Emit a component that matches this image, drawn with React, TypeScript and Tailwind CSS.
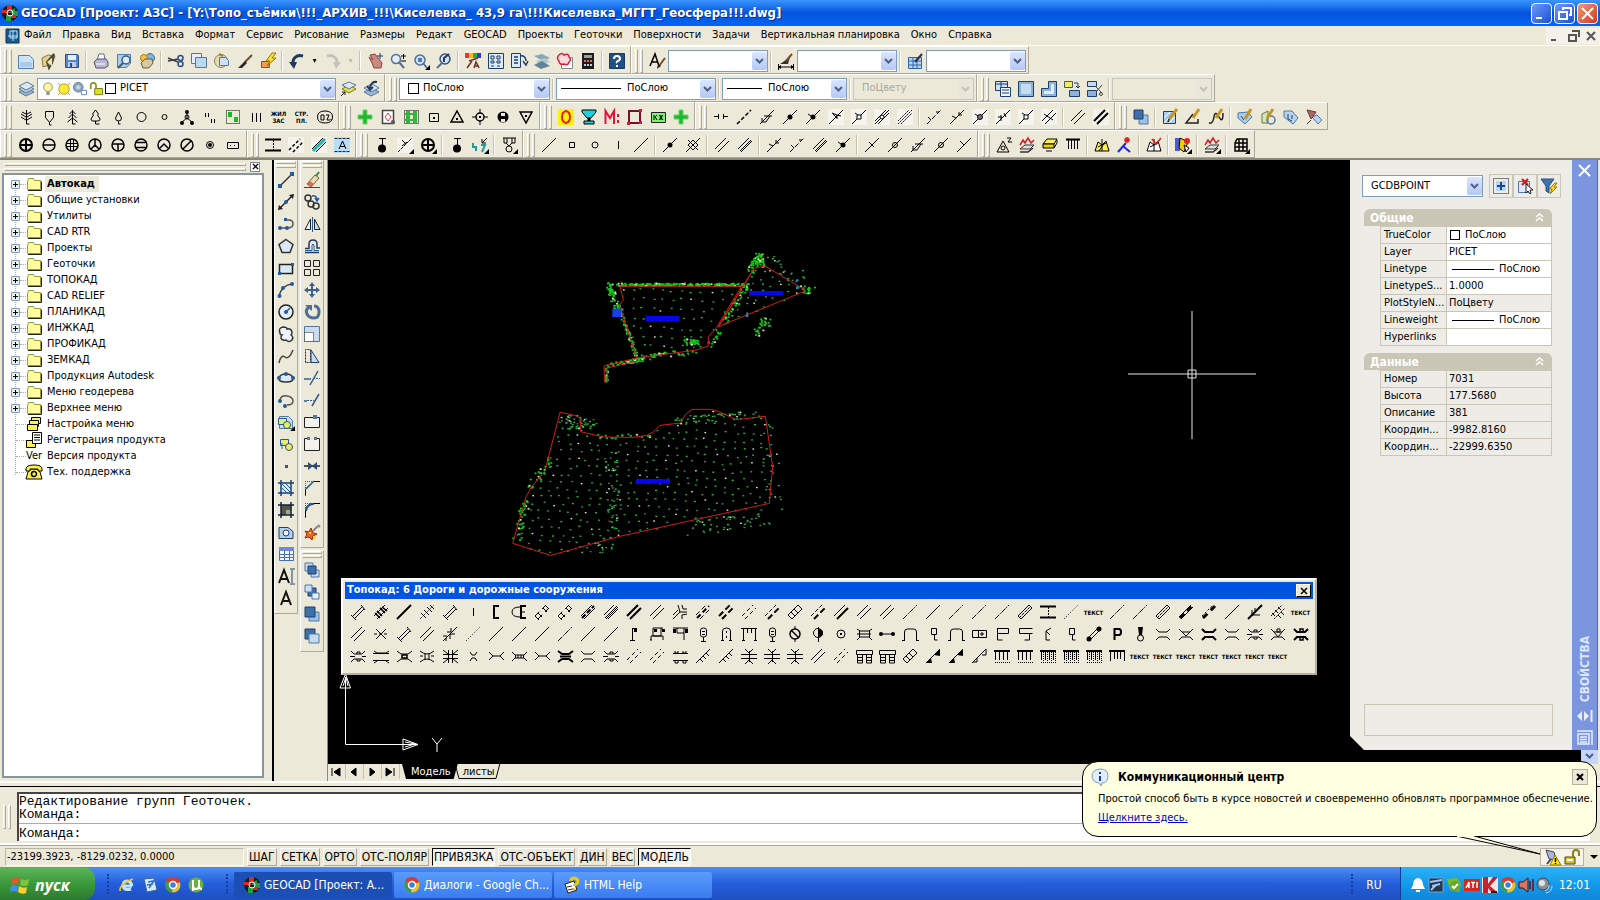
import { useState } from "react";
import type { ReactNode } from "react";
import clsx from "clsx";

// ─── Icon art ────────────────────────────────────────────────────────────────
// Every icon lives in a 16x16 box. A plain string is a thin black outline,
// an array is a stack of layers: [path, fill, stroke, width, dash].

type Layer = [d: string, fill?: string, stroke?: string, width?: number, dash?: string];
type Art = string | Layer[];

const ring = (x: number, y: number, r: number) =>
  `M${x - r} ${y}a${r} ${r} 0 1 0 ${2 * r} 0a${r} ${r} 0 1 0 ${-2 * r} 0z`;
const line = (d: string, stroke = "#000", width = 1, dash?: string): Layer => [d, "none", stroke, width, dash];
const box = (x: number, y: number, w: number, h: number) => `M${x} ${y}h${w}v${h}h${-w}z`;

const DIAG = "M1 15L15 1";
const PAIR = "M1 12L12 1M4 15L15 4";
const CULVERT = "M1 3L4 6H12L15 3M1 14L4 11H12L15 14";
const NAVY = "#1d3f6e";
const STEEL = "#4f78a8";
const PALE = "#c9dcf0";
const DOT = "#235a9c";
const SHEET: Layer = ["M1.500 2.500h9l4 4v8h-13z", PALE, STEEL];
const CORNER: Layer = ["M17 12v5h-5z", "#000"];

const art: Record<string, Art> = {
  // standard
  new: [["M.5 2.500h11l4 4v9h-15z", "#cfe3f6", "#4b7fb5"], ["M2 9h12v5h-12z", "#a9cbe9"]],
  open: [["M1 5l6-3 7 1-3 8-9 3z", "#e2cf93", "#8c7a3d"], line("M13 1l-7 8 2 6 3-5z", "#4e4b34", 2), ["M6 9l5-4v8z", "#f1e7b5"]],
  save: [["M1.500 1.500h12l1 1v12h-13z", "#5a86c4", "#28508c"], [box(4, 2, 8, 5), "#e4eefb"], [box(4, 9, 8, 5), "#b9cbe8"], [box(6, 10, 2, 4), "#28508c"]],
  print: [["M4 7l2-6h5l1 6z", "#fff", "#6a6d8c"], ["M1 9l3-3h9l2 3v4l-3 2h-9z", "#b8b8d4", "#50527a"], line("M3 11h9", "#fff")],
  preview: [["M1.500 1.500h13v9l-4 4h-9z", "#a9cdea", "#4b7fb5"], [ring(10, 7, 4), "#dcecf9", "#3d5c80", 1.500], line("M7 10l-5 5", "#3d5c80", 2)],
  publish: [[ring(11, 5, 4.500), "#7fb3e0", "#3a6ca0"], [ring(5, 5, 3.500), "#f3c341", "#a77c12"], ["M2 10l4-4h7l1 4-4 5h-6z", "#d8c9a5", "#6b5c3a"]],
  cut: [line("M0 5l10 4M0 8l10-2", "#3c3c44", 1.500), line(ring(12.500, 5, 2.500) + ring(12.500, 11, 2.500), "#2b4f8a", 1.500)],
  copy: [["M.5.5h10v10h-10z", "#e5f0fb", STEEL], ["M4.500 4.500h11v10h-11z", "#bcd9f2", STEEL]],
  paste: [[ring(7, 8, 6.500), "#e5dcae", "#8e8552"], ["M5.500 4.500h6l3 3v5h-9z", "#cfe2f5", STEEL], line("M5 1l4 2", "#8e8552", 2)],
  brush: [line("M15 2l-7 7", "#7b4a2a", 2), ["M8 8l2 2-5 5-4 0z", "#2c2a28"]],
  bolt: [["M1.500 8.500h8v6h-8z", "#f49c50", "#a04a10"], ["M12 0l-6 8h4l-3 5 9-8h-4l4-5z", "#ffdf28", "#94760b"]],
  undo: [line("M14 3C7 1 3 6 4 12", "#1f3a5f", 3), ["M0 9l8 0-3 7z", "#1f3a5f"]],
  redo: [line("M2 3c7-2 11 3 10 9", "#c4c2b8", 3), ["M16 9l-8 0 3 7z", "#c4c2b8"]],
  hand: [["M3 2l3 5-4-3 3 6 2 5h7l1-5-3-4-4-5z", "#c98a82", "#8a4640"], line("M13 0v6M10 3h6", NAVY)],
  zoomrt: [[ring(6, 6, 4.500), "#e1edf8", "#55708e", 1.500], line("M9 9l5 6", "#55708e", 2), line("M11 3h5M13.500 1v5M11 8h5", "#000")],
  zoomwin: [[ring(7, 7, 5), "#cfe1f4", "#55708e", 1.500], [box(5, 5, 4, 4), "#4b7fb5"], line("M10 10l4 5", "#55708e", 2), CORNER],
  zoomprev: [[ring(9, 6, 5), "#cfe1f4", "#37526f", 1.500], line("M6 10l-5 5", "#55708e", 2), line("M13 1L8 5v4", "#1f3a5f", 2)],
  props: [[box(0, 0, 4, 5), "#e33"], [box(4, 0, 4, 5), "#fb0"], [box(8, 0, 4, 5), "#3a3"], [box(12, 0, 4, 5), "#33e"], line("M2 15l5-7M13 5L4 8M9 15l2-6 3 6M10 13h4", "#70342c", 1.500)],
  design: [["M.5.5h15v15h-15z", "#dce9f7", NAVY], line(box(3, 3, 3, 3) + box(9, 3, 3, 3) + box(3, 8, 3, 2) + box(9, 8, 3, 2) + "M3 13h3M9 13h3", NAVY)],
  toolpal: [["M.5.5h9v14h-9z", "#dce9f7", NAVY], line("M3 4h4M3 7h4M3 10h4M9 3c4-1 6 2 6 5M12 8l3 4 2-4", NAVY, 1.500)],
  sheets: [["M0 3l8-2 8 4-7 3z", "#86a7b9"], ["M2 8l9-3 5 4-10 3z", "#b4c8d0"], ["M0 12l8-4 8 5-9 3z", "#5e8698"]],
  markup: [["M4.500 4.500h11v11h-11z", "#fff", "#888"], ["M2 2q3-3 5 0q5-2 5 2q3 3 0 5q-1 4-5 2q-5 1-5-3q-3-3 0-6z", "#ffd9dd", "#d2233c", 1.500]],
  calc: [[box(2, 0, 12, 16), "#1c1c20"], [box(4, 2, 8, 3), "#8ea88c"], [box(4, 7, 2, 2) + box(7, 7, 2, 2) + box(10, 7, 2, 2), "#e66"], [box(4, 11, 2, 2) + box(7, 11, 2, 2) + box(10, 11, 2, 2), "#ccc"]],
  help: [["M.5.5h15v15h-15z", "#1f5187", "#163a62"], line("M5 6q0-3 3-3t3 3q0 1-2 2t-1 2M8 12v2", "#fff", 2)],
  styleA: [line("M1 13L6 1l4 12M3 9h6", "#000", 1.500), line("M16 5l-6 8", "#7b4a2a", 2), ["M9 11l3 2-4 3z", "#222"]],
  styleDim: [line("M0 14h16M.5 11v6M15.500 11v6", "#000"), ["M0 14l3-2v4zM16 14l-3-2v4z", "#000"], ["M2 11l10-7-2 7z", "#333"], line("M14 1L8 8", "#7b4a2a", 2)],
  styleTable: [["M1.500 4.500h13v11h-13z", "#b9d4f1", "#2f66a8"], line("M1 8h13M1 12h13M6 4v11M10 4v11", "#2f66a8"), line("M15 1L8 9", "#333", 2)],
  // layers and viewports
  layers: [["M1 11l7 4 8-4-7-4z", "#9fb8d1", "#56779a"], ["M1 8l7 4 8-4-7-4z", "#bcd0e4", "#56779a"], ["M1 5l7 4 8-4-7-4z", "#dbe7f3", "#56779a"]],
  layercur: [["M2 8l7 4 7-4-7-4z", "#e5df4c", "#7a7a20"], ["M2 4l7 4 7-4-7-3z", "#dbe7f3", "#56779a"], line("M1 15l4-4M2 11h3v3", "#222")],
  layerprev: [["M1 11l7 4 8-4-7-4z", "#9fb8d1", "#56779a"], ["M1 7l7 4 8-4-7-4z", "#dbe7f3", "#56779a"], line("M14 1Q8 0 7 7M4 5l3 4 3-3", "#1f3a5f", 2)],
  bulb: [[ring(8, 6, 5), "#fff5ab", "#8e8543"], [box(6, 11, 4, 4), "#9a9a8a"]],
  sun: [[ring(8, 8, 6), "#ffe936", "#a79a1c"], line("M1 1l3 3M15 1l-3 3M1 15l3-3M15 15l-3-3", "#a79a1c")],
  freeze: [[ring(6, 6, 5.500), "#8fa6bb", "#5b7893"], [ring(6, 6, 2.500), "#c6d3df"], ["M9.500 9.500h6v5h-6z", "#fff", "#4b7fb5"]],
  lock: [["M6.500 7.500h9v7h-9z", "#d9e21c", "#6c7208"], line("M2 8V4q0-3 3-3t3 3v4", "#8d9422", 2)],
  vp1: [["M.5.5h12v9h-12z", "#cfe1f4", NAVY], line("M1 3h12M6 1v8", NAVY), ["M5.500 6.500h10v9h-10z", "#eef5fc", NAVY], line("M7 9h7M7 12h7", NAVY)],
  vp2: [["M.5.5h15v15h-15z", "#8fb3d8", NAVY], ["M3 3h10v10h-10z", "#c5dbf0"]],
  vp3: [["M7.500.5h8v15h-15v-8h7z", "#8fb3d8", NAVY], ["M10 3h3v10h-10v-3h7z", "#e1eefa"]],
  vp4: [["M.5.5h8v6h-8z", "#ebf255", "#555"], ["M5.500 9.500h10v6h-10z", "#8fb3d8", NAVY], line("M10 2h4v4M12 5l2 2 2-2", NAVY)],
  vp5: [["M.5.5h9v5h-9z", PALE, NAVY], ["M.5 9.500h9v6h-9z", "#8fb3d8", NAVY], line("M15 4l-6 7M9 6l6 6", "#444"), line(ring(14, 13, 1.500), "#444")],
  // plants and signs
  fir: [line("M8.500 1v14M8 5L4 3M9 5l4-2M8 8L3 5M9 8l5-3M8 11L3 8M9 11l5-3M8.500 15h3")],
  shield: "M4.500 2.500h8v6l-4 5l-4-5zM8.500 13v3h2",
  pine: "M8.500 1v14h3M8.500 2l-3 3M8.500 2l3 3M8.500 5l-4 4M8.500 5l4 4M8.500 9l-5 4M8.500 9l5 4",
  leaf: "M8.500 1L5.500 5l1 1L4 10q0 2 2 2h5q2 0 2-2l-2.500-4 1-1zM8.500 12v3h4",
  drop: "M8.500 3L5.500 9q0 3 3 3q3 0 3-3zM8.500 12v3h2",
  circle: ring(8.500, 8, 4.500),
  circleS: ring(8.500, 8, 2.500),
  tripod: [line("M8 3v6l-5 4M8 9l5 4"), [ring(8, 3, 2) + ring(3, 14, 2) + ring(13, 14, 2), "#000"], line(ring(8, 8, 2))],
  quotes: "M3.500 4v4M6.500 4v4M9.500 10v4M12.500 10v4",
  greensel: [line("M1.500 1.500h13v13h-13z", "#000", 1, "1 1"), [box(3, 3, 4, 5) + box(9, 8, 4, 5), "#10c020"]],
  bars: "M4.500 4v9M8.500 4v9M12.500 4v9",
  oval: [line("M.5 8q0-6 7.500-6t7.500 6-7.500 6-7.500-6z"), line("M4 6h3v5h-3zM9 6h3l-2 5h3M14 10v1")],
  plus: [["M6 1h4v5h5v4h-5v5h-4v-5h-5v-4h5z", "#23b82c", "#62d868"]],
  cardred: [["M2.500 1.500h11v13h-11z", "#fff", "#444", 1.500], line("M8 4l3 4-3 4-3-4z", "#e33"), [ring(13, 13, 2), "#555"]],
  greengrid: [line("M1.500 1.500h14v13h-14z", "#000", 1, "1 1"), ["M3 2h4v12h-4zM10 2h4v12h-4z", "#34b63c"], line("M2 5h12M2 11h12", "#34b63c", 2)],
  sqdot: [line("M3.500 4.500h9v8h-9z", "#000"), [box(7, 8, 2, 2), "#000"]],
  tri: [line("M8 2l6 11H2z", "#000", 1.500), [box(7, 9, 2, 2), "#000"]],
  target: [line(ring(8, 8, 4), "#000", 1.500), line("M8 0v4M8 12v4M0 8h4M12 8h4"), [box(7, 7, 2, 2), "#000"]],
  film: [[ring(8, 8, 5.500), "#000"], [box(6, 4, 4, 3) + box(6, 10, 4, 3), "#ece9d8"]],
  triDown: [line("M2 3h12L8 14z", "#000", 1.500), [box(7, 6, 2, 2), "#000"]],
  zero: [[box(0, 0, 16, 16), "#fff200"], line("M8 2q-4 1-4 6t4 6q4-1 4-6t-4-6z", "#e02010", 2)],
  goblet: [["M1 1h14v2l-5 6h-4L1 3z", "#22d0d8", "#000"], line("M8 9v4", "#000", 3), ["M3 12h10v3H3z", "#22d0d8", "#000"]],
  mred: [line("M1.500 15V2L6 9l4-7v13", "#e8103c", 2), [box(13, 5, 2, 3) + box(13, 11, 2, 3), "#e8103c"]],
  sqred: [line("M2 2h11v12H2z", "#7a1028", 2), [box(12, 0, 3, 3) + box(0, 13, 3, 3) + box(12, 12, 3, 3), "#e8103c"]],
  kj: [["M1.500 3.500h14v10h-14z", "#7ff070", "#222"], line("M4 6v5M7 6L5 8l2 3M11 6v5M9 6l4 5M13 6l-4 5", "#000")],
  // point symbols in a circle
  cPlus: [line(ring(8, 8, 6) + "M8 2v12M2 8h12", "#000", 2)],
  cMinus: [line(ring(8, 8, 6) + "M2 8h12", "#000", 1.500)],
  cGrid: [line(ring(8, 8, 6), "#000", 1.500), line("M6.500 2v12M9.500 2v12M2 6.500h12M2 9.500h12")],
  cY: [line(ring(8, 8, 6) + "M8 2v6l-4 4M8 8l4 4", "#000", 1.500)],
  cT: [line(ring(8, 8, 6) + "M2 7h12M8 7v7", "#000", 1.500)],
  cEq: [line(ring(8, 8, 6) + "M3 5.500h10M3 10.500h10", "#000", 1.500)],
  cCaret: [line(ring(8, 8, 6) + "M4 11l4-4 4 4", "#000", 1.500)],
  cSlash: [line(ring(8, 8, 6) + "M4 12l8-8", "#000", 1.500)],
  cSmall: [line(ring(8, 8, 3.500)), line(ring(8, 8, 1), "#000", 2)],
  rectdots: [line("M2.500 5.500h11v6h-11z"), line("M5 8.500h1M9 8.500h1", "#000")],
  hbeam: [line("M0 2.500h16M0 13.500h16", "#000", 2), line("M8.500 3v10", "#000", 1, "2 1")],
  dashes: [[box(0, 0, 16, 16), "#f4f3ee"], line("M1 13L12 2M5 15L15 5", "#000", 1.500, "3 2")],
  teal: [[box(0, 0, 16, 16), "#f4f3ee"], line("M2 14L14 2", "#25b5b5", 3), line("M1 12L12 1M5 15L15 5")],
  selA: [[box(0, 0, 16, 16), "#b9defa"], line("M.5 1.500h15M.5 14.500h15", "#223", 1, "3 1"), line("M5 12l3.500-8L12 12M6 9.500h5", "#000")],
  ballpole: [[ring(8, 11.500, 4), "#000"], line("M8.500 1v10M5 1.500h7")],
  xslash: [[box(0, 0, 16, 16), "#f4f3ee"], line("M1 15L15 1", "#000", 1, "3 1"), line("M5 3l4 4M10 5l-5 4"), CORNER],
  cplusM: [line(ring(8, 8, 6) + "M8 2v12M2 8h12", "#000", 2), CORNER],
  tealpts: [line("M1 6v4h3v4M9 8h4l-3 7", "#239c9c", 2), line("M15 1l-5 5M10 2v4h4"), CORNER],
  curtain: [line("M2 1h13M3 1v5h3v-5M11 1v5h3v-5M5 6l3 3 3-3"), line(ring(8, 12, 3)), CORNER],
  // diagonal line tools
  diag: DIAG,
  square: box(5.500, 5.500, 5, 5),
  circleM: ring(8, 8, 3),
  vbar: "M8.500 4v8",
  gap: "M1 7.500h4M5.500 5v5M15 7.500h-4M10.500 5v5",
  dash: [line(DIAG, "#000", 1.500, "4 2")],
  hatchZ: "M1 15L15 1M5 7h8M11 7l-4 6M3 9v4h4",
  dball: [line(DIAG), [ring(8, 8, 2.500), "#000"]],
  dballV: [line(DIAG), line("M3 5l3 2"), [ring(8, 8, 2.500), "#000"]],
  dwedge: [[box(0, 0, 16, 16), "#f4f3ee"], line("M1 15L15 1M4 4l5 2v4M9 6l4 1M5 5l4 4")],
  dring: [[box(0, 0, 16, 16), "#f4f3ee"], line(DIAG + "M4 4l3 2"), ["M6 6h4v4h-4z", "#fff", "#000"]],
  dtriple: [[box(0, 0, 16, 16), "#f4f3ee"], line("M1 12L12 1M1 15L15 1M4 15L15 4"), [ring(8, 8, 2), "#fff", "#000"]],
  dtripleD: [[box(0, 0, 16, 16), "#f4f3ee"], line("M1 12L12 1M1 15L15 1M4 15L15 4", "#000", 1, "2 1")],
  tickD: [line("M1 15L15 1", "#000", 1, "5 2"), line("M2 8l3 3M10 3h3")],
  tick: "M1 15L15 1M3 7l4 2M10 3v3h3",
  dballG: [[box(0, 0, 16, 16), "#f4f3ee"], line(DIAG + "M3 5l3 2"), [ring(8, 8, 2.500), "#777", "#000"]],
  dx: [[box(0, 0, 16, 16), "#f4f3ee"], line(DIAG + "M3 8h4M9 4l2 4M6 6v6")],
  pairT: [[box(0, 0, 16, 16), "#f4f3ee"], line(PAIR), line("M3 5l9 6")],
  pair: PAIR,
  pairB: [[box(0, 0, 16, 16), "#f4f3ee"], line(PAIR, "#000", 2)],
  pairBold: [line(PAIR, "#000", 2)],
  pairC: PAIR + "M3 14L14 3",
  dhatch: DIAG + "M3 3l10 10M3 8l5-5 5 5-5 5z",
  dringO: DIAG + ring(8, 8, 2.500),
  dcross: DIAG + "M5 5l5 5",
  dy: DIAG + "M4 4l4 4",
  // draw order and edit
  order: [["M6 6h9v9h-9z", "#9cc0e6", STEEL], ["M1 1h9v9H1z", "#3f6ea8", NAVY]],
  edHatch: [["M1.500 2.500h12v12h-12z", "#a9cdf0", NAVY], line("M2 14L13 3M2 9l6-6M7 14l6-6", "#fff"), line("M15 0L7 10", "#c8951d", 3), line("M7 10l-1 3", "#222", 1.500)],
  edPoly: [line("M8 5L1 14h12v-4", "#222", 1.500), line("M14 0L8 9", "#c8951d", 3)],
  edSpline: [line("M1 14q4 1 5-6t5 0 4-4", "#222", 1.500), line("M14 0L8 9", "#c8951d", 3)],
  edAttr: [["M1 4l10-1 4 5-7 7-7-6z", "#a9cdf0", STEEL], line("M14 0L8 10", "#c8951d", 3), line("M4 7l3 4", NAVY)],
  edBlock: [["M2 5l6-3v12H2z", "#d6e6b6", "#667a3a"], line(ring(11, 11, 4), STEEL, 1.500), line("M13 0L7 9", "#c8951d", 3)],
  edTag: [["M1 2l8 0 6 7-5 6-9-7z", "#b9d4ee", STEEL], line("M5 5v5l4 2M9 6v4", NAVY)],
  edTag2: [["M6 8l5-2 5 5-4 4z", "#b9d4ee", STEEL], ["M1 1l9 2-5 7z", "#a86a62", "#6b3a34"], line("M1 15l4-4", "#333")],
  // relief
  tri2: [line("M7 4l6 11H1z"), line(ring(7, 11, 2)), line("M11 1h4l-3 4h4")],
  relief: [line("M1 8l3-5 2 3 3-5 3 5 3-3", "#d2202c", 1.500), ["M1 12l5-4h9l-4 4z", "#ddd", "#333"], line("M1 15h8l5-4", "#333", 1.500)],
  slab: [["M1 7l4-5h10l-3 5z", "#fff04a", "#000"], ["M1 7h11v4H1z", "#e8d200", "#000"], line("M12 11l3-5v-3M4 14h6", "#000")],
  comb4: [line("M1 2.500h14", "#000", 2), line("M3.500 3v9M6.500 3v9M9.500 3v9M12.500 3v9")],
  mount: [["M1 14l3-9 4 3 4-4 3 10z", "#fff04a", "#000"], line("M8 2v12M4 10l8-4M5 14l6-9")],
  man: [line("M9 6L1 15M6 9l7 6", "#1a2ae0", 2), line("M10 0v6M7 3h6M8 1l4 4M12 1L8 5", "#e02020", 1.500)],
  mountR: [["M1 14l3-9 4 3 4-4 3 10z", "#fff", "#000"], line("M8 2v12M4 10l8-4"), line("M6 2l4 5 5-6", "#e02020", 1.500)],
  palette: [[box(0, 1, 5, 13), "#4a5ad0"], ["M5 1l8 4-4 10-5-4z", "#e8d200", "#000"], [ring(12, 4, 3), "#e02020"], ["M9 8l5 3-3 4z", "#fff", "#000"], CORNER],
  reliefM: [line("M1 8l3-5 2 3 3-5 3 5 3-3", "#d2202c", 1.500), ["M1 12l5-4h9l-4 4z", "#ddd", "#333"], line("M1 15h8l5-4", "#333", 1.500), CORNER],
  grid: [line("M4 2h10v12H2V6zM2 6h12M2 10h12M6 2v12M10 2v12", "#000", 1.500), CORNER],
  // draw column
  line: [line("M2 14L14 2", "#333", 1.500), [box(0, 12, 4, 4) + box(12, 0, 4, 4), DOT]],
  xline: [line("M1 15L15 1", "#222", 1.500), ["M0 16l1-5 4 4zM16 0l-5 1 4 4z", "#222"], [ring(8, 8, 2), DOT]],
  pline: [line("M1 12h8M8 4h3q4 0 4 4t-6 4", "#555", 1.500), [ring(2, 12, 2) + ring(9, 12, 2) + box(6, 2, 3, 3), DOT]],
  polygon: [["M8 1.500l7 5-3 8H4l-3-8z", "#d9e9f8", "#333", 1.500]],
  rect: [["M1.500 4.500h13v9h-13z", "#d9e9f8", "#222", 1.500], [box(0, 12, 3, 3) + box(13, 3, 3, 3), DOT]],
  arc: [line("M1 14Q4 3 14 2", "#444", 1.500), [ring(1.500, 14, 2) + ring(5, 6, 2) + ring(14, 2, 2), DOT]],
  circ: [[ring(8, 8, 7), "#e3effb", "#222", 1.500], line("M8 8l4-4", DOT, 1.500), [ring(8, 8, 2), DOT]],
  cloud: [["M2 7q-2-5 3-6 4 0 4 2 4-1 5 3 0 2-1 3 3 2 1 5-3 3-6 0-4 1-5-2 0-2 1-3-2 0-2-2z", "#eef4fb", "#333", 1.500]],
  spline: [line("M1 15q2-9 6-6t8-7", "#444", 1.500)],
  ellipse: [["M1 8q1-4 7-4t7 4-7 4-7-4z", "#dbe9f8", "#333", 1.500], [ring(1, 8, 2) + ring(8, 4, 2) + ring(15, 8, 2), DOT]],
  earc: [line("M2 8q1-5 7-4t6 5-6 4", "#555", 1.500), [ring(2, 9, 2) + ring(7, 14, 2), DOT]],
  insblock: [SHEET, ["M.5 4.500h8v6h-8z", "#e4ee70", DOT], [ring(9, 11, 3.500), "#e4ee70", "#34584a"], CORNER],
  mkblock: [["M2.500 3.500h8v6h-8z", "#e4ee70", DOT], [ring(11, 11, 3.500), "#e4ee70", "#4b4b4b"], line("M4 7v6", DOT)],
  point: [[box(7, 7, 3, 3), DOT]],
  hatch: [["M3 3h10v10H3z", "#d9e9f8"], line("M3 0v16M13 0v16M0 3h16M0 13h16", NAVY, 1.500), line("M3 7l6 6M3 3l10 10M7 3l6 6", DOT)],
  gradient: [["M3 3h10v10H3z", "#55564e"], ["M8 8h5v5h-5z", "#a6a78f"], line("M3 0v16M13 0v16M0 3h16M0 13h16", "#14213a", 1.500)],
  region: [["M1 3.500h9l5 4v7H1z", "#b5cfea", NAVY], [ring(8, 9, 3), "#e9f2fb", NAVY]],
  table: [["M1.500 1.500h14v13h-14z", "#f2f6fd", "#4a6cb0"], ["M1 1h15v4H1z", "#6c8cd4"], line("M1 8.500h14M1 11.500h14M6.500 5v10M11.500 5v10", "#4a6cb0")],
  mtext: [line("M1 15L6 2l5 13M3 11h6", "#111", 2), line("M14 2v13M12 1h5M12 16h5", NAVY)],
  stext: [line("M3 15L8 2l5 13M5 11h6", "#111", 2)],
  // modify column
  erase: [line("M0 15.500h16", "#922"), ["M3 12l8-9 4 3-8 9z", "#eddcae", "#6b5c3a"], ["M3 12l3-3 4 3-3 3z", "#e06858"], line("M15 0l-3 4", "#384", 2)],
  copyobj: [line(ring(4, 4, 3) + ring(7, 10, 3) + ring(12, 12, 3), "#333", 1.500), line("M8 2q5-1 5 4M11 4l2 3 2-3", DOT, 1.500)],
  mirror: [["M6.500 3v10.500H1z", "#eef4fb", "#222"], ["M10.500 3v10.500H16z", PALE, "#222"], line("M8.500 1v15", DOT)],
  offset: [line("M1 14.500h14M1 10.500h4V6q0-4 4-4t4 4v4h3", "#223a5e", 1.500), line("M1 12.500h7V7q1-2 2 0v5.500h5", DOT)],
  array: [line(box(.5, .5, 6, 6) + box(9.500, .5, 6, 6) + box(.5, 9.500, 6, 6) + box(9.500, 9.500, 6, 6), "#222")],
  move: [line("M8 2v12M2 8h12", "#3d608f", 2), ["M8 0l3 4H5zM8 16l3-4H5zM0 8l4-3v6zM16 8l-4-3v6z", "#3d608f"]],
  rotate: [line("M5 3q-4 3-2 7t7 4 5-6-5-6", "#4d6f98", 3), ["M1 1h7v6z", "#4d6f98"]],
  scale: [["M.5.5h15v15h-15z", PALE, STEEL], ["M.5 6.500h9v9h-9z", "#fff", "#222", 1, "1 1"]],
  stretch: [line("M1.500 14.500v-13h5v13z", "#222", 1, "2 1"), ["M7 2l8 12.500H7z", PALE, NAVY]],
  trim: [line("M0 9h7M14 1L6 15", "#345c92", 1.500), line("M9 8.500h7", "#345c92", 1, "2 1")],
  extend: [line("M15 2L8 14M0 9h3", "#345c92", 1.500), line("M3 8.500h7", "#345c92", 1, "2 1")],
  brk1: [["M.5 3.500h15v10H.5z", "#f3f2ec", "#222"], [box(9, 1, 4, 4), STEEL]],
  brk2: [["M.5 2.500h15v12H.5z", "#f3f2ec", "#222"], [box(5, 0, 6, 4), "#ece9d8"], [box(3, 1, 3, 3) + box(10, 1, 3, 3), STEEL]],
  join: [line("M0 8h16", "#222", 1.500), ["M4 4l5 4-5 4zM13 4L8 8l5 4z", "#2f4a70"]],
  chamfer: [line("M1.500 1v15M1 1.500h15", "#555", 1, "1 1"), line("M1.500 15V9l8-7.500H16", "#111", 1), line("M2 9l8-8", DOT, 1.500)],
  fillet: [line("M1.500 1v15M1 1.500h15", "#555", 1, "1 1"), line("M1.500 15V9Q2 2 9 1.500h7"), line("M2 9q1-7 8-7", DOT, 2)],
  explode: [["M1 7l4 1 2-4 2 5 4 1-4 2-1 4-3-3-4 1 2-4z", "#e06a20", "#b21c10"], [box(5, 8, 2, 2) + box(9, 12, 3, 3), "#f8e030"], line("M9 7l5-5M14 1l2 2", "#888", 2)],
  ord1: [["M1 1h8v8H1z", PALE, STEEL], ["M7 8h8v7H7z", PALE, STEEL], ["M4 4h8v8H4z", "#3f6ea8", NAVY]],
  ord2: [["M4 4h8v8H4z", "#3f6ea8", NAVY], ["M1 1h7v7H1z", PALE, STEEL], ["M8 9h7v6H8z", "#e6f0fa", STEEL]],
  ord3: [["M5 6h10v9H5z", "#9cc0e6", STEEL], ["M1 1h10v10H1z", "#3f6ea8", NAVY]],
  ord4: [["M1 1h10v10H1z", "#3f6ea8", NAVY], ["M5 6h10v9H5z", "#c6dbf0", STEEL]],
  // roads palette
  rLadder: "M3 12L12 3M5 14L14 5M1 11l5 5M11 1l4 5",
  rLadderB: [line(PAIR), line("M2 9l5 5M4 7l5 5M7 4l5 5M9 3l5 4", "#000", 1.500)],
  rThick: [line("M1 15L15 1", "#000", 2)],
  rTies: [line(DIAG, "#000", 1, "1 1"), line("M2 9l5 5M5 6l5 5M8 3l5 5M11 1l4 4")],
  rBracket: [line("M11 2H6v12h5", "#000", 2)],
  rBracketD: [line("M15 2h-5v12h5", "#000", 2), line("M9 3Q1 3 1 8t8 5M10 8h4")],
  rDashTie: [line(PAIR, "#000", 1, "6 4"), line("M1 12l4 4M4 9l4 4M9 4l4 4M11 1l4 4")],
  rTripleB: [line(PAIR, "#000", 1), line("M2 14L14 2", "#000", 2, "5 2")],
  rTriple: [line("M1 11L11 1M2 14L14 2M5 15L15 5", "#000", 1), line("M3 15L15 3")],
  rFork: "M1 15L8 8H15M8 8L6 1M1 11l5-5M10 15v-4l5-1M10 1l1 4h4",
  rDashMix: [line("M1 11L11 1M5 15L15 5", "#000", 1, "5 3"), line("M2 14L14 2", "#000", 2, "5 3")],
  rDashB: [line(PAIR, "#000", 2, "6 3")],
  rDash: [line(PAIR, "#000", 1, "4 3")],
  rDashOne: [line("M1 12L12 1", "#000", 1, "4 2"), line("M4 15L15 4", "#000", 2, "6 3")],
  rBoxes: [line("M1 11L11 1l4 4L5 15zM4 8l4 4M7 5l4 4")],
  rPairOne: [line("M1 12L12 1"), line("M4 15L15 4", "#000", 2)],
  rDot: [line(DIAG, "#000", 1, "1 2")],
  rDotDash: [line(DIAG, "#000", 1, "6 1 1 1")],
  rLadderC: [line("M1 12L12 1M4 15L15 4M1 12l3 3M12 1l3 3"), line("M2 14L14 2", "#000", 1, "3 1")],
  rBoldDash: [line("M1 13L13 1M3 15L15 3"), line("M2 14L14 2", "#000", 3, "6 4")],
  rBoldGap: [line("M2 14L14 2", "#000", 3, "6 5"), line("M1 12L12 1", "#000", 1, "2 2")],
  rBranch: [line(DIAG, "#000", 2), line("M5 11V6M5 11h8M8 8V4")],
  rHatch2: [line(PAIR, "#000", 1, "2 1"), line("M2 9l3 3M5 6l3 3M8 3l3 3M8 11l3 3M11 8l3 3")],
  rStar: [line("M1 8h14", "#000", 1, "3 2"), line("M3 3l10 10M13 3L3 13")],
  rBranch2: "M1 15L15 1M1 10h4M5 6h4M9 2v4M4 12v3M8 8h5M8 8v5",
  rFlag: [line("M6.500 2v12M4 14.500h5M6 2.500h5"), [box(8, 2, 3, 4), "#000"]],
  rFlagD: [line("M4 2v8h8V2M2 14v-4h12v4M4 2h10M1 14h2"), [box(5, 3, 3, 3) + box(13, 3, 3, 3), "#000"]],
  rFlagCh: [line("M1 2h15M5 2v5h7M12 2v12"), [box(1, 3, 3, 4) + box(13, 3, 3, 4), "#000"]],
  rLamp: "M5.500 4q0-2 3-2t3 2v5q0 2-3 2t-3-2zM8.500 11v4M6 15.500h5M7 5.500h3M7 8.500h3",
  rArch: [line("M4.500 15V5q0-3 4-3t4 3v10M3 14.500h3M11 14.500h3"), line("M8.500 5v9", "#000", 1, "2 3")],
  rComb: "M0 2.500h16M2.500 2v12M14.500 2v12M6.500 2v5M10.500 2v5M1 14.500h3M13 14.500h3",
  rNo: [line(ring(8, 8, 5), "#000", 1.500), line("M4 4l8 8", "#000", 1.500), line("M8 0v3M8 13v3")],
  rHalf: [["M8 3q5 0 5 4t-5 4z", "#000"], line(ring(8, 7, 4.500) + "M8.500 1v15")],
  rCircDot: [line(ring(8, 8, 4)), [box(7, 7, 2, 2), "#000"]],
  rBridge: "M1 3l3 2h9l3-2M1 14l3-3h9l3 3M3.500 5v6M13.500 5v6M1 8h14",
  rBell: [line("M1 8h14"), [ring(2, 8, 2) + ring(14, 8, 2), "#000"]],
  rGate: "M2.500 14V6q0-3 3-3h6q3 0 3 3v8M0 14.500h3M14 14.500h3",
  rPole: "M6.500 2.500h5v6h-5zM9.500 9v5h3",
  rBoxPlus: "M1.500 4.500h14v7h-14zM7.500 4v7M9 8h4M11 6v4",
  rSignL: "M3.500 2.500h11v5h-11M3.500 2v12h5",
  rSignR: "M15.500 2.500h-13v5h13M12.500 7v7h-5",
  rHook: "M11 2L6 5v9h4M6 5l4 4",
  rBalls: [line("M2 12L12 2M4 14L14 4"), [ring(3, 13, 2.500) + ring(13, 3, 2.500), "#000"]],
  rPark: [line("M5.500 14V3H10q2 0 2 3t-2 3H6", "#000", 2)],
  rPin: [["M6 1h5l-1 8H7z", "#000"], line(ring(8.500, 12, 3))],
  rCul: CULVERT,
  rCulX: CULVERT + "M3 5l5 5 5-5",
  rCulB: [line(CULVERT, "#000", 2)],
  rCulBox: CULVERT + "M7 6V4h3v2M7 11v2h3v-2M0 8.500h5M12 8.500h4",
  rCulXBox: CULVERT + "M4 6l4 5 4-5M7 3h3v3H7z",
  rCulBB: [line(CULVERT, "#000", 2), line("M7 6V3h3v3M7 11v3h3v-3", "#000", 1.500)],
  rWide: "M1 3l3 2h9l3-2M0 5.500h16M0 12.500h16M1 15l3-2M16 15l-3-2",
  rBoxX: [line("M1 3l4 3h7l4-3M1 14l4-3h7l4 3"), line(box(6, 7, 5, 3), "#000", 1.500)],
  rCurve: "M1 3q7 6 14 0M1 14q7-6 14 0M1 8h3M12 8h3M6 6v5M10 6v5",
  rHash: "M6.500 2v13M10.500 2v13M1 6.500h15M1 10.500h15M1 2l5 4M16 2l-5 4M1 15l5-4M16 15l-5-4",
  rSmallX: "M5 4l2 3h3l2-3M5 13l2-3h3l2 3",
  rArrow: "M1 4l4 4h7l4-4M1 12l4-4M16 12l-4-4",
  rArrowBox: "M1 4l3 3h9l3-3M1 13l3-3h9l3 3M4.500 7v3M12.500 7v3M7 7v3M10 7v3",
  rCulB3: [line("M1 3l4 3h7l4-3M1 14l4-3h7l4 3M3 8.500h11", "#000", 2)],
  rRail: "M1 5.500h15M1 12.500h15M3 3v2h3V3M11 3v2h3V3M3 13v2h3v-2M11 13v2h3v-2",
  rSlope: "M1 15L15 1M5 11l3 3M8 8l3 3M11 5l3 3",
  rCross: "M0 6.500h16M0 10.500h16M8.500 3v11M4 1l4 4 4-4M4 16l4-4 4 4",
  rTable: "M.5 2.500h16v4h-16zM1.500 6v9h5V6M10.500 6v9h5V6M1 9.500h5M1 12.500h5M10 9.500h5M10 12.500h5",
  rFlagB: [line("M1 15L15 1"), ["M15 1v7l-6-1zM1 15l6 0-1-5z", "#000"]],
  rFlagT: [line("M1 15L15 1v6h-4M2 14h4v-4")],
  rTeeth: [line("M0 3h16", "#000", 2), line("M1.500 3v9M5.500 3v9M9.500 3v9M13.500 3v9"), line("M1 14.500h16", "#000", 1, "1 1")],
  rTeethD: [line("M0 3h16", "#000", 2), line("M1.500 3v9M5.500 3v9M9.500 3v9M13.500 3v9"), line("M3.500 4v9M7.500 4v9M11.500 4v9M15.500 4v9M1 14.500h16", "#000", 1, "1 1")],
  rTeethO: [line("M0 3h16", "#000", 2), line("M1.500 3v10M5.500 3v8M8.500 3v8M11.500 3v8M15.500 3v10")],
  // properties palette
  pick: [line("M.5.5h15v15h-15z", "#111", 1, "1 1"), ["M3 3h10v10H3z", "#b5d6f6"], line("M8 4v8M4 8h8", "#164a8c", 2)],
  select: [["M1.500 3.500h11v11h-11z", "#dbe9f9", STEEL], line("M5 1l6 6M11 1L5 7", "#d01818", 2), ["M9 6v9l2-2 2 3 1-1-1-3h3z", "#fff", "#222"]],
  quick: [["M0 1h13L8 8v7l-3-2V8z", "#3d74ae", "#274f7c"], ["M14 5l-6 6h3l-2 5 7-7h-3l3-4z", "#ffd428", "#9a7a0c"]],
  // system
  geocad: [[ring(8, 8, 8), "#191b18"], ["M5 0h5v5H7v3H0V5h5z", "#e02722"], ["M7 8h4v3h5v-5h-3v-3l-2 1z", "#1f9e45"], ["M4 10h5v6H4z", "#1f9e45"], ["M9 10h5v3H9z", "#e02722"], line(ring(8, 8, 3), "#fff")],
  doc: [["M1 1h13v14H1z", "#175a8e", "#0d3556"], line("M5 3h7v7H5zM3 8h10M8 2v11", "#b9e4ff")],
  ie: [line("M13 9H4q0-5 4-5t5 5M4 9q1 5 8 3", "#bfe6ff", 3), line("M1 14Q0 7 14 2", "#f1c33a", 1.500)],
  desk: [["M2 2l10-1 3 12-10 2z", "#d6e8fa", "#39649c"], line("M6 5l5-1M5 8l6-1M13 2L7 11", "#2b6fc0", 1.500)],
  chrome: [[ring(8, 8, 7.500), "#e8c22b"], ["M8 8L1 4q2-4 7-4t7 5z", "#da3a2c"], ["M8 8L1 4q-3 8 6 12z", "#3a9c4a"], [ring(8, 8, 3.500), "#3f7de0", "#fff", 1.500]],
  utorrent: [[ring(8, 8, 7.500), "#69b33c"], line("M5 3v6q0 3 3 3t3-3V3M11 9q0 3 3 3M5 8v6", "#fff", 2)],
  book: [["M1 7l9-3 3 9-9 3z", "#fff", "#222"], line("M7 4q0-3 3-3t4 3q0 2-2 3t-2 2M10 11v2", "#e8cc10", 3), line("M3 10l5-1M4 13l5-1", "#333")],
  bell: [["M8 1q5 1 5 7l2 4H1l2-4q0-6 5-7z", "#fff"], [box(6, 13, 4, 2), "#fff"]],
  winupd: [["M1 1h14v14H1z", "#23364d", "#7aa0c8"], line("M2 5l12-2M4 9l8-2M3 13l5-5", "#9cc4ee", 2)],
  check: [["M1 2l10-1 4 6-2 8-9-2z", "#79bb2e"], [ring(9, 9, 5), "#66a822"], line("M6 9l2 2 4-4", "#fff", 2)],
  ati: [[box(0, 2, 16, 12), "#d9271c"], line("M2 11l3-6v6M3 9h2M7 5.500h4M9 5v6M13 5v6", "#fff", 1.500)],
  kasper: [[box(0, 0, 16, 16), "#f0e6e4"], ["M1 0h5v7l5-7h5L8 9l8 7h-6l-4-5v5H1z", "#c8202c"], line("M9 15h6", "#222", 2)],
  sound: [["M1 5h4l5-4v14l-5-4H1z", "#e0735a", "#3c1410"], line("M12 4v8M15 2v12", "#612", 1.500)],
  speaker: [[ring(7, 7, 6), "#8b9095", "#444"], [ring(6, 6, 3), "#dfe5ea"], line("M13 8q1 4-4 6M16 9q0 6-6 7", "#b6dcff")],
  satwarn: [["M2 1l8 2 2 8-7-1z", "#a8b8d8", "#445"], line("M3 15l4-5", "#445", 2), ["M11 6l6 10H6z", "#ffe030", "#8c7a00"], line("M11.500 9v4M11.500 14v1", "#000", 1.500)],
  padlock: [["M1 8h10v7H1z", "#d8c228", "#4d4408"], line("M9 8V4q0-3 3-3t3 3v3", "#8d8012", 2), line("M3 11h6", "#fff", 2)],
  info: [["M8 0q8 0 8 7t-6 7l-1 3-2-3Q0 13 0 7t8-7z", "#e2edfb", "#7e9cc8"], line("M8 3v2M8 7v5", "#1440b0", 2)],
  phone: [["M2 8l2-3h8l2 3 2 7H0z", "#fff04a", "#000"], ["M0 5q0-4 8-4t8 4v2h-4V5H4v2H0z", "#fff04a", "#000"], line(ring(8, 10, 2.500), "#000", 1.500)],
  stack: [["M5.500 1.500h9v6h-9z", "#fff04a", "#000"], ["M3.500 4.500h9v6h-9z", "#fff04a", "#000"], ["M1.500 8.500h10v6h-10z", "#fff04a", "#000"]],
  register: [["M.5 8.500h9v7h-9z", "#fff04a", "#000"], ["M6.500.5h9v11h-9z", "#fff", "#000"], line("M8 3h6M8 5.500h6M8 8h6")],
  folder: [["M1.500 5.500l1-3h5l1 2h6v9h-13z", "#fffa9c", "#9a9a3c"], line("M2 14.500h13.500v-9", "#222")],
};

const Icon = ({ name, className = "size-4" }: { name: string; className?: string }) => {
  const layers: Layer[] = typeof art[name] === "string" ? [line(art[name] as string)] : (art[name] as Layer[]);
  return (
    <svg viewBox="0 0 16 16" className={clsx("shrink-0 overflow-visible", className)} aria-hidden="true">
      {layers.map(([d, fill = "none", stroke = "none", width = 1, dash], i) => (
        <path key={i} d={d} fill={fill} stroke={stroke} strokeWidth={width} strokeDasharray={dash} />
      ))}
    </svg>
  );
};

// ─── Data ────────────────────────────────────────────────────────────────────

const menus = [
  "Файл", "Правка", "Вид", "Вставка", "Формат", "Сервис", "Рисование", "Размеры", "Редакт", "GEOCAD",
  "Проекты", "Геоточки", "Поверхности", "Задачи", "Вертикальная планировка", "Окно", "Справка",
];

const words = (s: string) => s.split(" ");

const standardBar = words(
  "new open save | print preview publish | cut copy paste brush bolt | undo ▾ redo ▿ | hand zoomrt zoomwin zoomprev | props design toolpal sheets markup calc | help"
);
const viewportBar = words("vp1 vp2 vp3 vp4 vp5 |");

const symbolBars = [
  words("fir shield pine leaf drop circle circleS tripod quotes greensel bars ЖИЛ/ЗАС СТР./ПЛ. oval"),
  words("plus cardred greengrid sqdot tri target film triDown"),
  words("zero goblet mred sqred kj plus"),
  words("gap dash hatchZ dball dballV dwedge dring dtriple dtripleD | tickD tick dballG dx dring pairT | pair pairB"),
  words("order | edHatch edPoly edSpline | edAttr edBlock edTag edTag2"),
];

const lineBars = [
  words("cPlus cMinus cGrid cY cT cEq cCaret cSlash cSmall rectdots"),
  words("hbeam dashes teal selA"),
  words("ballpole xslash cplusM | ballpole tealpts | curtain"),
  words("diag square circleM vbar diag | dball dhatch | pair pairC | tick tickD pairC dballV | dcross dringO hatchZ dringO dy"),
  words("tri2 relief slab comb4 | mount man | mountR | palette | reliefM | grid"),
];

const drawColumn = words(
  "line xline pline polygon rect arc circ cloud spline ellipse earc insblock mkblock point hatch gradient region table mtext stext"
);
const modifyColumn = words(
  "erase copyobj mirror offset array move rotate scale stretch trim extend brk1 brk2 join chamfer fillet explode"
);
const orderColumn = words("ord1 ord2 ord3 ord4");

const roadRows = [
  words(
    "rLadder rLadderB rThick rTies rLadder vbar rBracket rBracketD rDashTie rDashTie rTripleB rTriple pairBold pair rFork rDashMix rDashB rDash rDashOne rBoxes rDashOne rPairOne pair pair rDotDash diag rDotDash rDotDash rDotDash rLadderC hbeam rDot ТЕКСТ rDotDash rDotDash rLadderC rBoldDash rBoldGap diag rBranch rHatch2 ТЕКСТ"
  ),
  words(
    "pair rStar rLadder pair rBranch2 rDot diag diag diag rDotDash diag diag rFlag rFlagD rFlagCh rLamp rArch rComb rLamp rNo rHalf rCircDot rBridge rBell rGate rPole rGate rBoxPlus rSignL rSignR rHook rPole rBalls rPark rPin rCul rCulX rCulB rCul rCulBox rCulXBox rCulBB"
  ),
  words(
    "rCulBox rWide rBoxX rCurve rHash rSmallX rArrow rArrowBox rArrow rCulB3 rCul rCulBox rDash rDash rRail rSlope rSlope rCross rCross rCross pair rDash rTable rTable rBoxes rFlagB rFlagB rFlagT rTeeth rTeeth rTeethD rTeethD rTeethD rTeethO ТЕКСТ ТЕКСТ ТЕКСТ ТЕКСТ ТЕКСТ ТЕКСТ ТЕКСТ"
  ),
];

const treeFolders = [
  "Автокад", "Общие установки", "Утилиты", "CAD RTR", "Проекты", "Геоточки", "ТОПОКАД", "CAD RELIEF",
  "ПЛАНИКАД", "ИНЖКАД", "ПРОФИКАД", "ЗЕМКАД", "Продукция Autodesk", "Меню геодерева", "Верхнее меню",
];
const treeLeaves = [
  { label: "Настройка меню", icon: "stack" },
  { label: "Регистрация продукта", icon: "register" },
  { label: "Версия продукта", icon: "Ver" },
  { label: "Тех. поддержка", icon: "phone" },
];

const general: [string, string, string?][] = [
  ["TrueColor", "ПоСлою", "swatch"],
  ["Layer", "PICET"],
  ["Linetype", "ПоСлою", "rule"],
  ["LinetypeS...", "1.0000"],
  ["PlotStyleN...", "ПоЦвету", "locked"],
  ["Lineweight", "ПоСлою", "rule"],
  ["Hyperlinks", ""],
];
const details: [string, string, string?][] = [
  ["Номер", "7031", "locked"],
  ["Высота", "177.5680", "locked"],
  ["Описание", "381", "locked"],
  ["Координ...", "-9982.8160", "locked"],
  ["Координ...", "-22999.6350", "locked"],
];

const modes = ["ШАГ", "СЕТКА", "ОРТО", "ОТС-ПОЛЯР", "ПРИВЯЗКА", "ОТС-ОБЪЕКТ", "ДИН", "ВЕС", "МОДЕЛЬ"];

// ─── Toolbars ────────────────────────────────────────────────────────────────

const Grip = () => (
  <span className="flex w-[13px] shrink-0 items-center gap-[2px] pl-[3px]">
    <i className="h-6 w-[3px] border border-t-white border-r-[#aca899] border-b-[#aca899] border-l-white" />
    <i className="h-6 w-[3px] border border-t-white border-r-[#aca899] border-b-[#aca899] border-l-white" />
  </span>
);

const Bar = ({ children }: { children: ReactNode }) => (
  <div className="flex h-7 shrink-0 items-center border border-t-white border-r-[#aca899] border-b-[#aca899] border-l-white pt-px pr-[2px]">
    <Grip />
    {children}
  </div>
);

const Tool = ({ name, className = "h-[22px] w-[23px]" }: { name: string; className?: string }) => {
  if (name === "|") return <span className="mx-[2px] h-5 w-[2px] shrink-0 border-l border-[#c5c2b2] border-r border-r-white" />;
  if (name === "▾" || name === "▿")
    return (
      <button aria-label="history" className={clsx("w-[13px] shrink-0 text-[8px]", name === "▾" ? "text-black" : "text-[#bbb8a8]")}>
        ▾
      </button>
    );
  const isText = !(name in art);
  return (
    <button aria-label={name} className={clsx("flex shrink-0 items-center justify-center hover:bg-[#c1d2ee]", className)}>
      {isText ? (
        <span className="text-center text-[6px] leading-[7px] font-bold">
          {words(name.replace("/", " ")).map((part) => (
            <span key={part} className="block">{part}</span>
          ))}
        </span>
      ) : (
        <Icon name={name} />
      )}
    </button>
  );
};

const ToolRow = ({ items }: { items: string[] }) => (
  <>{items.map((name, i) => <Tool key={i} name={name} />)}</>
);

interface ComboProps {
  label: string;
  value?: string;
  className: string;
  disabled?: boolean;
  children?: ReactNode;
}

const Combo = ({ label, value = "", className, disabled, children }: ComboProps) => (
  <label
    className={clsx(
      "relative flex h-[22px] shrink-0 items-center border pl-1",
      disabled ? "border-[#c9c7ba] bg-[#ece9d8] text-[#aca899]" : "border-[#7f9db9] bg-white",
      className
    )}
  >
    {children}
    <select aria-label={label} disabled={disabled} className="h-full min-w-0 flex-1 appearance-none bg-transparent pl-1 outline-none">
      <option>{value}</option>
    </select>
    <span
      className={clsx(
        "pointer-events-none flex h-[18px] w-[15px] items-center justify-center rounded-xs",
        disabled ? "bg-[#e9e6da]" : "bg-linear-to-b from-[#dbe6fd] to-[#b4c8f6]"
      )}
    >
      <svg viewBox="0 0 9 6" className="h-[6px] w-[9px]">
        <path d="M1 1l3.500 3.500L8 1" fill="none" stroke={disabled ? "#c5c2b4" : "#4d6185"} strokeWidth="2" />
      </svg>
    </span>
  </label>
);

const Swatch = () => <i className="ml-1 size-[11px] shrink-0 border border-black bg-white" />;

const VerticalBar = ({ items }: { items: string[] }) => (
  <div className="flex flex-col items-center border border-t-white border-r-[#aca899] border-b-[#aca899] border-l-white pb-1">
    <span className="h-[3px] w-5 border border-t-white border-r-[#aca899] border-b-[#aca899] border-l-white" />
    <span className="mt-px mb-px h-[3px] w-5 border border-t-white border-r-[#aca899] border-b-[#aca899] border-l-white" />
    {items.map((name) => <Tool key={name} name={name} className="h-[22px] w-[22px]" />)}
  </div>
);

// ─── Tree panel ──────────────────────────────────────────────────────────────

const TreePanel = () => {
  const [selected, setSelected] = useState("Автокад");
  return (
    <aside className="flex w-[274px] shrink-0 flex-col border-r-2 border-black pr-2 pb-[3px] pl-[2px]">
      <div className="flex h-[13px] items-center gap-1 pl-[2px]">
        <div className="flex flex-1 flex-col gap-[2px]">
          <i className="h-[3px] border border-t-white border-r-[#aca899] border-b-[#aca899] border-l-white" />
          <i className="h-[3px] border border-t-white border-r-[#aca899] border-b-[#aca899] border-l-white" />
        </div>
        <button aria-label="Закрыть" className="mr-1 flex size-[10px] items-center justify-center border border-[#888] bg-white">
          <svg viewBox="0 0 8 8" className="size-[7px]"><path d="M1 1l6 6M7 1L1 7" stroke="#000" strokeWidth="1.500" /></svg>
        </button>
      </div>
      <ul className="relative flex-1 border-2 border-[#8496a4] bg-white pt-px before:absolute before:top-3 before:left-[11px] before:h-[288px] before:border-l before:border-dotted before:border-[#aaa]">
        {treeFolders.map((label) => (
          <li key={label} className="relative flex h-4 items-center pl-[7px]">
            <button aria-label={`Развернуть ${label}`} className="flex size-[9px] items-center justify-center rounded-[1px] border border-[#7b9ab8] bg-[#eef0ee]">
              <svg viewBox="0 0 5 5" className="size-[5px]"><path d="M0 2.500h5M2.500 0v5" stroke="#000" /></svg>
            </button>
            <i className="w-[6px] border-t border-dotted border-[#aaa]" />
            <button onClick={() => setSelected(label)} className="flex items-center gap-[3px]">
              <Icon name="folder" />
              <span className={clsx("px-[2px] leading-4", selected === label && "bg-[#ece9d8] pr-1 font-bold")}>{label}</span>
            </button>
          </li>
        ))}
        {treeLeaves.map(({ label, icon }) => (
          <li key={label} className="flex h-4 items-center pl-[12px]">
            <i className="w-[10px] border-t border-dotted border-[#aaa]" />
            <button onClick={() => setSelected(label)} className="flex items-center gap-[3px]">
              {icon === "Ver" ? <span className="w-4">Ver</span> : <Icon name={icon} />}
              <span className="px-[2px] leading-4">{label}</span>
            </button>
          </li>
        ))}
      </ul>
    </aside>
  );
};

// ─── Drawing ─────────────────────────────────────────────────────────────────

type Pt = [number, number];

const northSite: Pt[] = [[360, 139], [724, 139], [650, 262], [625, 290], [625, 318], [590, 330], [410, 354], [370, 230], [358, 195], [370, 180]];
const eastSite: Pt[] = [[762, 85], [795, 78], [918, 152], [655, 260]];
const southSite: Pt[] = [
  [180, 517], [232, 528], [242, 540], [242, 575], [310, 591], [400, 592], [440, 586], [460, 576], [480, 556], [542, 549],
  [555, 525], [575, 508], [630, 508], [655, 514], [680, 526], [710, 539], [796, 529], [818, 680], [808, 790],
  [355, 890], [152, 946], [38, 910], [78, 770], [95, 740], [135, 692],
];

const poly = (pts: Pt[]) => pts.map((p) => p.join(",")).join(" ");

const inside = ([x, y]: Pt, pts: Pt[]) => {
  let hit = false;
  for (let i = 0, j = pts.length - 1; i < pts.length; j = i++) {
    const [xi, yi] = pts[i];
    const [xj, yj] = pts[j];
    if (yi > y !== yj > y && x < ((xj - xi) * (y - yi)) / (yj - yi) + xi) hit = !hit;
  }
  return hit;
};

let seed = 7031;
const rand = () => {
  seed = (seed * 16807) % 2147483647;
  return seed / 2147483647;
};

// survey pickets laid on a slightly slanted grid
const pickets = (site: Pt[], stepX: number, stepY: number): Pt[] => {
  const out: Pt[] = [];
  for (let y = 60; y < 960; y += stepY)
    for (let x = 20; x < 960; x += stepX) {
      const p: Pt = [x + rand() * 14 + (y % 7) * 2, y + rand() * 12 + (x - 500) * 0.03];
      if (inside(p, site)) out.push(p);
    }
  return out;
};

// pickets scattered along an edge
const along = (a: Pt, b: Pt, count: number, spread: number): Pt[] =>
  Array.from({ length: count }, () => {
    const t = rand();
    return [a[0] + (b[0] - a[0]) * t + (rand() - 0.5) * spread, a[1] + (b[1] - a[1]) * t + (rand() - 0.5) * spread] as Pt;
  });

const faint: Pt[] = [
  ...pickets(northSite, 30, 28),
  ...pickets(eastSite, 26, 20),
  ...pickets(southSite, 29, 23),
  ...along([560, 870], [810, 825], 50, 50),
  ...along([800, 60], [930, 140], 24, 50),
  ...along([800, 560], [825, 800], 26, 50),
  ...along([240, 940], [350, 900], 18, 40),
  ...along([330, 640], [345, 880], 45, 40),
  ...along([190, 540], [270, 560], 50, 44),
  ...along([510, 540], [780, 522], 55, 24),
];
const bright: Pt[] = [
  ...along([350, 132], [740, 132], 210, 8),
  ...along([325, 132], [350, 200], 55, 20),
  ...along([352, 190], [408, 350], 60, 10),
  ...along([320, 375], [430, 355], 50, 12),
  ...along([318, 380], [318, 424], 18, 8),
  ...along([420, 352], [590, 330], 26, 16),
  ...along([550, 304], [588, 304], 34, 18),
  ...along([455, 344], [485, 342], 20, 10),
  ...along([625, 318], [740, 130], 56, 16),
  ...along([750, 90], [775, 45], 46, 24),
  ...along([775, 45], [785, 75], 26, 20),
  ...along([760, 275], [805, 235], 28, 34),
  ...along([905, 145], [935, 150], 16, 20),
  ...along([45, 900], [80, 770], 34, 28),
  ...along([85, 750], [150, 650], 26, 22),
  ...along([290, 588], [450, 585], 20, 12),
];

const SitePlan = () => (
  <svg viewBox="0 0 990 990" className="absolute top-[80px] left-[172px] size-[330px]" aria-label="План участков">
    {faint.map(([x, y], i) => (
      <rect key={i} x={x} y={y} width={i % 3 ? 6 : 5} height="4" fill={i % 9 === 0 ? "#d8f0d8" : i % 2 ? "#2cbc40" : "#2f9c40"} />
    ))}
    {bright.map(([x, y], i) => (
      <rect key={i} x={x} y={y} width="6" height="5" fill={i % 8 === 0 ? "#d8e8b0" : "#14c814"} />
    ))}
    <g fill="none" stroke="#d01c1c" strokeWidth="3">
      <polygon points={poly(northSite)} />
      <polygon points={poly(eastSite)} />
      <polyline points="762,85 735,130 655,262" />
      <polygon points={poly(southSite)} />
      <polyline points="410,354 312,378 314,426 322,426 322,384 410,364" />
    </g>
    <g fill="#0505f0">
      <rect x="437" y="228" width="101" height="15" />
      <rect x="747" y="153" width="103" height="14" />
      <rect x="407" y="717" width="103" height="14" />
    </g>
    <rect x="337" y="206" width="26" height="25" fill="#1540e8" />
    <path d="M888 118h8v6h-8zM890 138h8v8h-8zM737 223h8v8h-8z" fill="#2a7ac0" />
  </svg>
);

const RoadsPalette = () => (
  <section className="absolute top-[418px] left-[13px] border-2 border-t-white border-r-[#b5b2a4] border-b-[#b5b2a4] border-l-white bg-[#ece9d8] p-[2px]">
    <header className="flex h-[17px] items-center justify-between bg-[#0054e3] pr-[2px] pl-[2px] font-bold text-white">
      Топокад: 6 Дороги и дорожные сооружения
      <button aria-label="Закрыть панель" className="flex h-[13px] w-[15px] items-center justify-center border border-white border-r-black border-b-black bg-[#ece9d8]">
        <svg viewBox="0 0 8 8" className="size-2"><path d="M1 1l6 6M7 1L1 7" stroke="#000" strokeWidth="1.500" /></svg>
      </button>
    </header>
    <div className="pt-[2px] pr-[1px] pb-1 pl-[1px]">
      {roadRows.map((row, i) => (
        <div key={i} className="flex">
          {row.map((name, j) => <Tool key={j} name={name} className="h-[22px] w-[23px]" />)}
        </div>
      ))}
    </div>
  </section>
);

// ─── Properties palette ──────────────────────────────────────────────────────

const PropertyGroup = ({ title, rows }: { title: string; rows: [string, string, string?][] }) => (
  <section className="mb-[7px] w-[188px]">
    <h2 className="flex h-[17px] items-center justify-between rounded-t-md bg-[#c9c6b5] pr-2 pl-[6px] text-[12px] font-bold text-white">
      {title}
      <svg viewBox="0 0 9 9" className="size-[9px]"><path d="M1 4l3.500-3L8 4M1 8l3.500-3L8 8" fill="none" stroke="#fff" strokeWidth="1.500" /></svg>
    </h2>
    <table className="ml-4 w-[172px] table-fixed border-collapse">
      <tbody>
        {rows.map(([name, value, kind], i) => (
          <tr key={i} className="h-[17px]">
            <th scope="row" className="w-[66px] overflow-hidden border border-[#c9c6b5] py-0 pr-0 pl-[3px] text-left leading-4 font-normal whitespace-nowrap">
              {name}
            </th>
            <td className={clsx("border border-[#c9c6b5] py-0 pl-[2px] leading-4", kind !== "locked" && "bg-white")}>
              <span className="flex items-center gap-[5px]">
                {kind === "swatch" && <i className="ml-[1px] size-[10px] border border-black" />}
                {kind === "rule" && <i className="ml-[3px] w-[42px] border-t border-black" />}
                {value}
              </span>
            </td>
          </tr>
        ))}
      </tbody>
    </table>
  </section>
);

const PropertiesPalette = () => (
  <aside className="absolute top-0 right-0 bottom-[14px] flex w-[248px]">
    <div className="flex min-w-0 flex-1 flex-col bg-[#eeece7] pt-[14px] pr-2 pb-[14px] pl-[14px] [clip-path:polygon(0_0,100%_0,100%_100%,14px_100%,0_calc(100%-14px))]">
      <div className="mb-[11px] -ml-[2px] flex items-center gap-[6px]">
        <Combo label="Тип объекта" value="GCDBPOINT" className="w-[121px] pl-0" />
        <div className="flex">
          {["pick", "select", "quick"].map((name) => (
            <button key={name} aria-label={name} className="flex size-6 items-center justify-center border border-[#c9c6b5]">
              <Icon name={name} />
            </button>
          ))}
        </div>
      </div>
      <PropertyGroup title="Общие" rows={general} />
      <PropertyGroup title="Данные" rows={details} />
      <div className="mt-auto h-8 w-[189px] border border-[#c9c6b5]" />
    </div>
    <div className="flex w-[26px] shrink-0 flex-col items-center justify-between border-r border-[#5368a8] bg-[#7b95de] py-1">
      <button aria-label="Закрыть свойства">
        <svg viewBox="0 0 13 13" className="size-[13px]"><path d="M1 1l11 11M12 1L1 12" stroke="#fff" strokeWidth="2" /></svg>
      </button>
      <div className="flex flex-col items-center gap-2 text-white">
        <span className="rotate-180 text-[12px] leading-none font-bold text-[#dce6ff] [writing-mode:vertical-rl]">СВОЙСТВА</span>
        <button aria-label="Автоскрытие">
          <svg viewBox="0 0 16 12" className="h-3 w-4"><path d="M0 6l5-5v10zM12 6L7 1v10z" fill="#e6eeff" /><path d="M14.500 0v12" stroke="#e6eeff" strokeWidth="2" /></svg>
        </button>
        <button aria-label="Параметры">
          <svg viewBox="0 0 16 16" className="size-4"><path d="M1 4h11v10H1zM3 7h7M3 9.500h7M3 12h7M0 1h15v14" fill="none" stroke="#e6eeff" strokeWidth="1.500" /></svg>
        </button>
      </div>
    </div>
  </aside>
);

const Canvas = () => (
  <main className="flex min-w-0 flex-1 flex-col pb-[2px]">
    <div className="relative flex-1 overflow-hidden bg-black">
      <SitePlan />
      {/* UCS icon */}
      <svg viewBox="0 0 110 80" className="absolute top-[512px] left-[10px] h-20 w-[110px]">
        <path d="M7.500 5v67.500H80M2 16L7.500 2l5 14zM65 67l15 5.500L65 78zM94 66l5 6 5-6M99 72v8M5 14l3-9 2 9M67 70l10 2-10 3" fill="none" stroke="#fff" />
      </svg>
      {/* crosshair */}
      <svg viewBox="0 0 129 129" className="absolute top-[151px] left-[800px] size-[128px]">
        <path d="M64.500 0v129M0 63.500h129M60.500 59.500h8v8h-8z" fill="none" stroke="#e8e8e8" />
      </svg>
      <RoadsPalette />
      <button aria-label="Прокрутить вниз" className="absolute right-0 bottom-0 flex h-4 w-[17px] items-center justify-center bg-[#c4d4fb]">
        <svg viewBox="0 0 9 6" className="h-[6px] w-[9px]"><path d="M1 1l3.500 3.500L8 1" fill="none" stroke="#4d6185" strokeWidth="2" /></svg>
      </button>
      <PropertiesPalette />
    </div>
    <div className="flex h-[15px] items-center">
      {["M4 3v8M12 3v8L6 7z", "M10 3v8L5 7z", "M6 3v8l5-4z", "M12 3v8M4 3v8l6-4z"].map((d) => (
        <button key={d} aria-label="Листать вкладки" className="h-[15px] w-[18px] border-r border-[#c5c2b2]">
          <svg viewBox="0 0 16 14" className="h-[14px] w-4"><path d={d} stroke="#000" strokeWidth="1" /></svg>
        </button>
      ))}
      <button className="ml-[2px] h-[15px] bg-black pr-[7px] pl-[9px] leading-[14px] text-white [clip-path:polygon(0_0,100%_0,calc(100%-4px)_100%,4px_100%)]">
        Модель
      </button>
      <button className="relative h-[15px] px-[5px] leading-[14px]">
        листы
        <svg viewBox="0 0 44 15" preserveAspectRatio="none" className="absolute inset-0 size-full overflow-visible"><path d="M-3 0L1 14.500H40L44 0" fill="none" stroke="#000" /></svg>
      </button>
    </div>
  </main>
);

// ─── Bottom area ─────────────────────────────────────────────────────────────

const CommandLine = () => (
  <section className="border-t-2 border-white font-['Liberation_Mono',monospace] text-[13px]">
    <div className="mt-[3px] flex border-t border-black pt-[5px]">
      <Grip />
      <div className="ml-1 flex-1 border-t-2 border-l-2 border-[#444] bg-white">
        <p className="pt-px leading-[13px]">Редактирование групп Геоточек.</p>
        <p className="mb-[2px] leading-[13px]">Команда:</p>
        <label className="flex h-[18px] items-center border-t border-[#aaa] pt-[2px]">
          Команда:
          <input type="text" aria-label="Команда" className="ml-1 h-4 min-w-0 flex-1 bg-transparent outline-none" />
        </label>
      </div>
      <i className="w-[10px]" />
    </div>
    <div className="mt-[2px] h-[2px] bg-white" />
  </section>
);

const StatusBar = () => {
  const [active, setActive] = useState(["ПРИВЯЗКА", "МОДЕЛЬ"]);
  const toggle = (mode: string) =>
    setActive((prev) => (prev.includes(mode) ? prev.filter((m) => m !== mode) : [...prev, mode]));
  return (
    <div className="flex h-[22px] items-center gap-[3px] border-t border-[#aca899] pl-[5px]">
      <output className="h-[18px] w-[239px] border border-[#b8b5a5] border-r-white border-b-white pl-px leading-4">
        -23199.3923, -8129.0232, 0.0000
      </output>
      {modes.map((mode) => (
        <button
          key={mode}
          aria-pressed={active.includes(mode)}
          onClick={() => toggle(mode)}
          className={clsx(
            "h-[18px] border px-[1px] text-[12px] leading-4",
            active.includes(mode)
              ? "border-t-black border-r-white border-b-white border-l-black bg-[#f5f3ea]"
              : "border-t-white border-r-[#aca899] border-b-[#aca899] border-l-white"
          )}
        >
          {mode}
        </button>
      ))}
      <div className="ml-auto flex h-[18px] items-center gap-1 border border-[#b8b5a5] bg-[#f5f3ea] px-[3px]">
        <Icon name="satwarn" />
        <Icon name="padlock" />
      </div>
      <button aria-label="Меню строки состояния" className="flex w-[13px] justify-center">
        <svg viewBox="0 0 8 4" className="h-1 w-2"><path d="M0 0h8L4 4z" /></svg>
      </button>
    </div>
  );
};

const Balloon = () => {
  const [open, setOpen] = useState(true);
  if (!open) return null;
  return (
    <div role="status" className="absolute right-[3px] bottom-[63px] w-[515px] rounded-2xl border border-black bg-[#ffffe1] px-[15px] pt-[7px] pb-[10px]">
      <div className="-ml-[6px] flex items-center gap-[10px]">
        <Icon name="info" />
        <h2 className="flex-1 text-[12px] leading-4 font-bold">Коммуникационный центр</h2>
        <button
          aria-label="Закрыть сообщение"
          onClick={() => setOpen(false)}
          className="-mr-[7px] flex size-4 items-center justify-center border border-[#b5b29c] bg-[#ece9d8]"
        >
          <svg viewBox="0 0 8 8" className="size-2"><path d="M1 1l6 6M7 1L1 7" stroke="#000" strokeWidth="2" /></svg>
        </button>
      </div>
      <p className="mt-[6px] leading-4 whitespace-nowrap">
        Простой способ быть в курсе новостей и своевременно обновлять программное обеспечение.
      </p>
      <a href="#" className="mt-[3px] block leading-4 text-[#0000c8] underline">Щелкните здесь.</a>
      <svg viewBox="0 0 90 20" className="absolute top-full right-[54px] h-5 w-[90px]">
        <path d="M4 0L88 18L22 0" fill="#ffffe1" stroke="#000" />
        <path d="M5 0h16" stroke="#ffffe1" strokeWidth="2" />
      </svg>
    </div>
  );
};

const tasks = [
  { label: "GEOCAD [Проект: A...", icon: "geocad", active: true },
  { label: "Диалоги - Google Ch...", icon: "chrome" },
  { label: "HTML Help", icon: "book" },
];

const Taskbar = () => (
  <footer className="flex h-[33px] items-center bg-linear-to-b from-[#4b8df5] via-[#245edb] to-[#1e4fc0] text-[12px] text-white">
    <button className="flex h-full w-[95px] items-center gap-[5px] rounded-r-xl bg-linear-to-b from-[#5db55a] via-[#3a9a3b] to-[#2c7a2d] pt-[2px] pl-[10px] font-['Open_Sans',sans-serif] text-[16px] font-bold italic">
      <svg viewBox="0 0 20 18" className="h-[18px] w-5">
        <path d="M2 3q4-3 7-1L8 8Q4 7 1 9z" fill="#e8562a" />
        <path d="M11 3q4 2 8 0l-1 6q-4 2-8 0z" fill="#7dc63c" />
        <path d="M1 10q3-2 7 0l-1 6q-4-2-7 0z" fill="#3f8ef0" />
        <path d="M9 10q4 3 8 1l-1 6q-4 2-8-1z" fill="#f8cf35" />
      </svg>
      пуск
    </button>
    <i className="ml-3 h-5 border-l-2 border-dotted border-[#153f9e]" />
    <div className="ml-[10px] flex gap-[7px] pt-[2px]">
      {["ie", "desk", "chrome", "utorrent"].map((name) => (
        <button key={name} aria-label={name}><Icon name={name} /></button>
      ))}
    </div>
    <i className="ml-[22px] h-5 border-l-2 border-dotted border-[#153f9e]" />
    <div className="ml-[6px] flex gap-[2px] pt-[3px]">
      {tasks.map(({ label, icon, active }) => (
        <button
          key={label}
          className={clsx(
            "flex h-[26px] w-[158px] items-center gap-1 rounded-xs pl-[10px]",
            active ? "bg-[#1c4fb5]" : "bg-linear-to-b from-[#5a9bfb] to-[#3a7cf0]"
          )}
        >
          <Icon name={icon} />
          {label}
        </button>
      ))}
    </div>
    <i className="ml-auto h-5 border-l-2 border-dotted border-[#153f9e]" />
    <button className="mx-[9px] w-6 pt-[3px]">RU</button>
    <div className="ml-[5px] flex h-full w-[200px] items-center gap-[2px] border-l border-[#0b3f9c] bg-linear-to-b from-[#2db1f5] via-[#139bec] to-[#0f85d8] pt-[2px] pl-[9px]">
      {["bell", "winupd", "check", "ati", "kasper", "chrome", "sound", "speaker"].map((name) => (
        <button key={name} aria-label={name}><Icon name={name} /></button>
      ))}
      <time className="ml-[5px]">12:01</time>
    </div>
  </footer>
);

// ─── App ─────────────────────────────────────────────────────────────────────

const App = () => (
  <div className="relative flex min-h-screen flex-col overflow-hidden bg-[#ece9d8] font-['DejaVu_Sans_Condensed','DejaVu_Sans',sans-serif] text-[11px] text-black">
    <header className="flex h-[26px] items-center bg-linear-to-b from-[#3a95ff] via-[#0553dd] to-[#0466f5] pr-[2px] pl-[2px]">
      <Icon name="geocad" />
      <h1 className="ml-[3px] flex-1 text-[13px] font-bold whitespace-nowrap text-white [text-shadow:1px_1px_#0a2a80]">
        {"GEOCAD [Проект: АЗС] - [Y:\\Топо_съёмки\\!!!_АРХИВ_!!!\\Киселевка_ 43,9 га\\!!!Киселевка_МГГТ_Геосфера!!!.dwg]"}
      </h1>
      <div className="flex gap-[2px]">
        {[
          { label: "Свернуть", d: "M4 14h6", tone: "bg-linear-to-br from-[#6f9af5] to-[#1b4fd0]" },
          { label: "Восстановить", d: "M8 6V4h8v7h-2M4 8h8v7H4z", tone: "bg-linear-to-br from-[#6f9af5] to-[#1b4fd0]" },
          { label: "Закрыть", d: "M4 4l11 11M15 4L4 15", tone: "bg-linear-to-br from-[#f0957a] to-[#cf3510]" },
        ].map(({ label, d, tone }) => (
          <button key={label} aria-label={label} className={clsx("size-[21px] rounded-sm border border-white", tone)}>
            <svg viewBox="0 0 19 19" className="size-full"><path d={d} fill="none" stroke="#fff" strokeWidth="2" /></svg>
          </button>
        ))}
      </div>
    </header>

    <nav className="flex h-5 items-center gap-[11px] border-b border-white pl-[5px]">
      <Icon name="doc" />
      {menus.map((label, i) => (
        <button key={label} className={clsx("whitespace-nowrap", i === 0 && "-ml-2")}>{label}</button>
      ))}
      <div className="ml-auto flex">
        {["M4 12h5", "M7 3h7v6M4 7h7v6H4z", "M4 4l8 8M12 4l-8 8"].map((d) => (
          <button key={d} aria-label="Окно документа" className="flex w-[18px] justify-center bg-[#f3f1e9]">
            <svg viewBox="0 0 16 16" className="size-4"><path d={d} fill="none" stroke="#555" strokeWidth="2" /></svg>
          </button>
        ))}
      </div>
    </nav>

    <div className="border-b-2 border-[#8a8878]">
      <div className="flex">
        <Bar><ToolRow items={standardBar} /></Bar>
        <Bar>
          <Tool name="styleA" />
          <Combo label="Текстовый стиль" className="w-[100px]" />
          <Tool name="|" />
          <Tool name="styleDim" />
          <Combo label="Размерный стиль" className="w-[100px]" />
          <Tool name="|" />
          <Tool name="styleTable" />
          <Combo label="Стиль таблиц" className="w-[100px]" />
        </Bar>
      </div>
      <div className="flex">
        <Bar>
          <Tool name="layers" />
          <Combo label="Слой" value="PICET" className="w-[299px] pl-[3px]">
            {["bulb", "sun", "freeze", "lock"].map((name) => <Icon key={name} name={name} className="mr-[2px] size-[14px]" />)}
            <i className="size-[11px] shrink-0 border border-black bg-white" />
          </Combo>
          <ToolRow items={["layercur", "layerprev"]} />
        </Bar>
        <Bar>
          <Combo label="Цвет" value="ПоСлою" className="w-[151px]"><Swatch /></Combo>
          <Tool name="|" />
          <Combo label="Тип линий" value="ПоСлою" className="w-[160px]"><i className="mr-[2px] w-[60px] border-t border-black" /></Combo>
          <Tool name="|" />
          <Combo label="Вес линий" value="ПоСлою" className="w-[125px]"><i className="mr-[2px] w-[35px] border-t border-black" /></Combo>
          <Tool name="|" />
          <Combo label="Стиль печати" value="ПоЦвету" className="w-[121px]" disabled />
        </Bar>
        <Bar>
          <ToolRow items={viewportBar} />
          <Combo label="Масштаб" className="w-[100px]" disabled />
        </Bar>
      </div>
      <div className="flex">{symbolBars.map((items, i) => <Bar key={i}><ToolRow items={items} /></Bar>)}</div>
      <div className="flex">{lineBars.map((items, i) => <Bar key={i}><ToolRow items={items} /></Bar>)}</div>
    </div>

    <div className="flex flex-1 pr-[2px]">
      <TreePanel />
      <div className="flex w-[54px] shrink-0 items-start gap-[2px] border-r border-[#888]">
        <VerticalBar items={drawColumn} />
        <div className="flex flex-col gap-[2px]">
          <VerticalBar items={modifyColumn} />
          <VerticalBar items={orderColumn} />
        </div>
      </div>
      <Canvas />
    </div>

    <CommandLine />
    <StatusBar />
    <Taskbar />
    <Balloon />
  </div>
);

export default App;
